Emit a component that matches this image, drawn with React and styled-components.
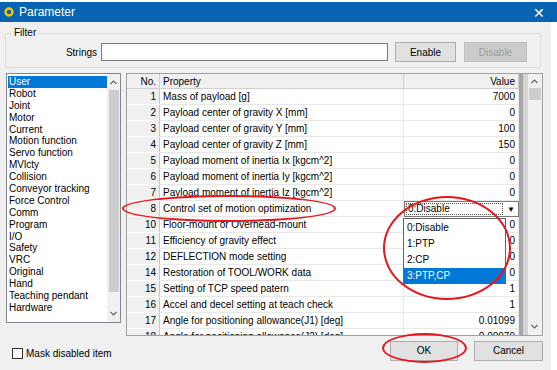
import React from "react";
import styled, { createGlobalStyle } from "styled-components";

const GlobalStyle = createGlobalStyle`
  html, body {
    margin: 0;
    padding: 0;
    background: #f4f7fb;
  }
  body {
    font-family: "Liberation Sans", "Noto Sans", sans-serif;
    font-size: 10px;
    color: #000;
  }
`;

const Window = styled.div`
  position: relative;
  width: 557px;
  height: 370px;
  overflow: hidden;
  background: #ffffff;
`;

const TitleBar = styled.div`
  margin-top: 2px;
  height: 20px;
  background: #0863b2;
  display: flex;
  align-items: center;
  padding: 0 4px;
  color: #fff;
  font-size: 12px;
`;

const TitleText = styled.span`
  margin-left: 5px;
  flex: 1;
`;

const CloseGlyph = styled.span`
  width: 24px;
  text-align: center;
  font-size: 14px;
  margin-right: 2px;
  font-family: "Noto Sans", sans-serif;
  font-weight: 300;
`;

const Body = styled.div`
  width: 552px;
  height: 348px;
  background: #f0f0f0;
  border-right: 1px solid #ffffff;
  box-sizing: border-box;
  padding: 11px 8px 0 5px;
  display: flex;
  flex-direction: column;
`;

const GroupBox = styled.fieldset`
  margin: 0 2px 0 0;
  padding: 0;
  height: 35px;
  border: 1px solid #dcdcdc;
  border-radius: 2px;
  box-sizing: border-box;
  display: flex;
  align-items: center;
  position: relative;
`;

const Legend = styled.span`
  position: absolute;
  left: 6px;
  top: -7px;
  padding: 0 2px;
  background: #f0f0f0;
`;

const FilterRow = styled.div`
  display: flex;
  align-items: center;
  margin-top: 8px;
`;

const FieldLabel = styled.span`
  width: 91px;
  text-align: right;
  margin-right: 4px;
`;

const TextBox = styled.div`
  width: 287px;
  height: 18px;
  background: #fff;
  border: 1px solid #7a7a7a;
  box-sizing: border-box;
`;

const Button = styled.div`
  width: ${(p) => p.$w}px;
  height: 20px;
  margin-left: ${(p) => p.$ml}px;
  box-sizing: border-box;
  border: 1px solid ${(p) => (p.$disabled ? "#bfbfbf" : "#adadad")};
  background: ${(p) => (p.$disabled ? "#cccccc" : "#e1e1e1")};
  color: ${(p) => (p.$disabled ? "#9a9a9a" : "#000")};
  display: flex;
  align-items: center;
  justify-content: center;
`;

const MainRow = styled.div`
  display: flex;
  align-items: flex-start;
  margin-top: 5px;
  margin-left: 1px;
`;

const ListBox = styled.div`
  width: 115px;
  height: 250px;
  background: #fff;
  border: 1px solid #828790;
  box-sizing: border-box;
  display: flex;
`;

const ListItems = styled.div`
  flex: 1;
  padding-top: 2px;
  padding-left: 1px;
`;

const ListItem = styled.div`
  height: 11.9px;
  line-height: 11.9px;
  padding-left: 1px;
  white-space: nowrap;
  background: ${(p) => (p.$selected ? "#0078d7" : "transparent")};
  color: ${(p) => (p.$selected ? "#fff" : "#000")};
`;

const VScroll = styled.div`
  width: ${(p) => p.$w}px;
  background: #f0f0f0;
  display: flex;
  flex-direction: column;
  align-items: center;
`;

const Arrow = styled.div`
  height: ${(p) => p.$h}px;
  display: flex;
  align-items: center;
  justify-content: center;
  color: #606060;
`;

const Thumb = styled.div`
  width: ${(p) => p.$w}px;
  height: ${(p) => p.$h}px;
  background: #cdcdcd;
`;

const Spacer = styled.div`
  flex: 1;
`;

const Table = styled.div`
  position: relative;
  margin-left: 5px;
  width: 417px;
  height: 263px;
  background: #fff;
  border: 1px solid #a0a0a0;
  box-sizing: border-box;
  display: flex;
  overflow: hidden;
`;

const Grid = styled.div`
  width: 392px;
  display: grid;
  grid-template-columns: 33px 244px 115px;
  grid-auto-rows: 16px;
  grid-template-rows: 15px;
  align-content: start;
`;

const HeadCell = styled.div`
  background: #f0f0f0;
  border-right: 1px solid #d0d0d0;
  border-bottom: 1px solid #d0d0d0;
  box-sizing: border-box;
  padding: 0 3px;
  display: flex;
  align-items: center;
  justify-content: ${(p) => (p.$right ? "flex-end" : "flex-start")};
`;

const NoCell = styled.div`
  background: #f0f0f0;
  border-right: 1px solid #c8c8c8;
  border-bottom: 1px solid #ffffff;
  box-sizing: border-box;
  padding-right: 3px;
  display: flex;
  align-items: center;
  justify-content: flex-end;
`;

const Cell = styled.div`
  border-right: 1px solid #e8e8e8;
  border-bottom: 1px solid #e8e8e8;
  box-sizing: border-box;
  padding: 0 3px;
  white-space: nowrap;
  overflow: hidden;
  display: flex;
  align-items: center;
  justify-content: ${(p) => (p.$right ? "flex-end" : "flex-start")};
`;

const Splitter = styled.div`
  width: 9px;
  display: flex;
`;

const SplitDark = styled.div`
  width: 4px;
  background: #a6a6a6;
`;

const SplitLight = styled.div`
  flex: 1;
  background: #d4d4d4;
`;

const Combo = styled.div`
  width: 115px;
  height: 16px;
  box-sizing: border-box;
  border: 1px solid #7a7a7a;
  background: #fff;
  display: flex;
  align-items: center;
`;

const ComboText = styled.span`
  flex: 1;
  padding-left: 2px;
  outline: 1px dotted #555;
  outline-offset: -1px;
  margin: 1px;
  line-height: 12px;
`;

const ComboButton = styled.span`
  width: 14px;
  display: flex;
  align-items: center;
  justify-content: center;
  font-size: 8px;
`;

const DropList = styled.div`
  position: absolute;
  left: 276px;
  top: 144px;
  width: 103px;
  height: 66px;
  background: #fff;
  border: 1px solid #646464;
  box-sizing: border-box;
  padding-top: 1px;
`;

const DropItem = styled.div`
  height: 16px;
  line-height: 16px;
  padding-left: 3px;
  background: ${(p) => (p.$selected ? "#0078d7" : "transparent")};
  color: ${(p) => (p.$selected ? "#fff" : "#000")};
`;

const BottomRow = styled.div`
  display: flex;
  align-items: center;
  margin-top: 4px;
  height: 21px;
`;

const CheckLabel = styled.label`
  display: flex;
  align-items: center;
  margin-left: 7px;
  margin-top: 6px;
  flex: 1;
`;

const CheckBox = styled.span`
  width: 11px;
  height: 11px;
  box-sizing: border-box;
  border: 1px solid #333;
  background: #fff;
  margin-right: 3px;
`;

const Ring = styled.div`
  position: absolute;
  left: ${(p) => p.$x}px;
  top: ${(p) => p.$y}px;
  width: ${(p) => p.$w}px;
  height: ${(p) => p.$h}px;
  border: 2.5px solid #e8161c;
  border-radius: 50%;
  box-sizing: border-box;
  pointer-events: none;
`;

const categories = [
  "User",
  "Robot",
  "Joint",
  "Motor",
  "Current",
  "Motion function",
  "Servo function",
  "MVlcty",
  "Collision",
  "Conveyor tracking",
  "Force Control",
  "Comm",
  "Program",
  "I/O",
  "Safety",
  "VRC",
  "Original",
  "Hand",
  "Teaching pendant",
  "Hardware",
];

const rows = [
  [1, "Mass of payload [g]", "7000"],
  [2, "Payload center of gravity X [mm]", "0"],
  [3, "Payload center of gravity Y [mm]", "100"],
  [4, "Payload center of gravity Z [mm]", "150"],
  [5, "Payload moment of inertia Ix [kgcm^2]", "0"],
  [6, "Payload moment of inertia Iy [kgcm^2]", "0"],
  [7, "Payload moment of inertia Iz [kgcm^2]", "0"],
  [8, "Control set of motion optimization", null],
  [10, "Floor-mount or Overhead-mount", "0"],
  [11, "Efficiency of gravity effect", "0"],
  [12, "DEFLECTION mode setting", "0"],
  [14, "Restoration of TOOL/WORK data", "0"],
  [15, "Setting of TCP speed patern", "1"],
  [16, "Accel and decel setting at teach check", "1"],
  [17, "Angle for positioning allowance(J1) [deg]", "0.01099"],
  [18, "Angle for positioning allowance(J2) [deg]", "0.00970"],
];

const options = ["0:Disable", "1:PTP", "2:CP", "3:PTP,CP"];

function AppIcon() {
  return (
    <svg width="10" height="10" viewBox="0 0 10 10">
      <circle cx="5" cy="5" r="3.5" fill="none" stroke="#f7c600" strokeWidth="2.4" />
    </svg>
  );
}

function Chevron({ down }) {
  return (
    <svg width="7" height="5" viewBox="0 0 7 5">
      <path
        d={down ? "M0.5 1 L3.5 4 L6.5 1" : "M0.5 4 L3.5 1 L6.5 4"}
        fill="none"
        stroke="#606060"
        strokeWidth="1.1"
      />
    </svg>
  );
}

export default function App() {
  return (
    <Window>
      <GlobalStyle />
      <TitleBar>
        <AppIcon />
        <TitleText>Parameter</TitleText>
        <CloseGlyph>✕</CloseGlyph>
      </TitleBar>
      <Body>
        <GroupBox>
          <Legend>Filter</Legend>
          <FilterRow>
            <FieldLabel>Strings</FieldLabel>
            <TextBox />
            <Button $w={61} $ml={7}>Enable</Button>
            <Button $w={63} $ml={8} $disabled>Disable</Button>
          </FilterRow>
        </GroupBox>
        <MainRow>
          <ListBox>
            <ListItems>
              {categories.map((c, i) => (
                <ListItem key={c} $selected={i === 0}>{c}</ListItem>
              ))}
            </ListItems>
            <VScroll $w={13}>
              <Arrow $h={16}><Chevron /></Arrow>
              <Thumb $w={10} $h={202} />
              <Spacer />
              <Arrow $h={18}><Chevron down /></Arrow>
            </VScroll>
          </ListBox>
          <Table>
            <Grid>
              <HeadCell $right>No.</HeadCell>
              <HeadCell>Property</HeadCell>
              <HeadCell $right>Value</HeadCell>
              {rows.map(([no, prop, val]) => (
                <React.Fragment key={no}>
                  <NoCell>{no}</NoCell>
                  <Cell>{prop}</Cell>
                  {val === null ? (
                    <Combo>
                      <ComboText>0:Disable</ComboText>
                      <ComboButton>▼</ComboButton>
                    </Combo>
                  ) : (
                    <Cell $right>{val}</Cell>
                  )}
                </React.Fragment>
              ))}
            </Grid>
            <Splitter>
              <SplitDark />
              <SplitLight />
            </Splitter>
            <VScroll $w={15}>
              <Arrow $h={14}><Chevron /></Arrow>
              <Thumb $w={12} $h={12} />
              <Spacer />
              <Arrow $h={18}><Chevron down /></Arrow>
            </VScroll>
            <DropList>
              {options.map((o, i) => (
                <DropItem key={o} $selected={i === 3}>{o}</DropItem>
              ))}
            </DropList>
          </Table>
        </MainRow>
        <BottomRow>
          <CheckLabel>
            <CheckBox />
            Mask disabled item
          </CheckLabel>
          <Button $w={68} $ml={0}>OK</Button>
          <Button $w={69} $ml={16}>Cancel</Button>
        </BottomRow>
      </Body>
      <Ring $x={122} $y={195} $w={214} $h={27} />
      <Ring $x={383} $y={196} $w={128} $h={104} />
      <Ring $x={382} $y={333} $w={85} $h={30} />
    </Window>
  );
}
